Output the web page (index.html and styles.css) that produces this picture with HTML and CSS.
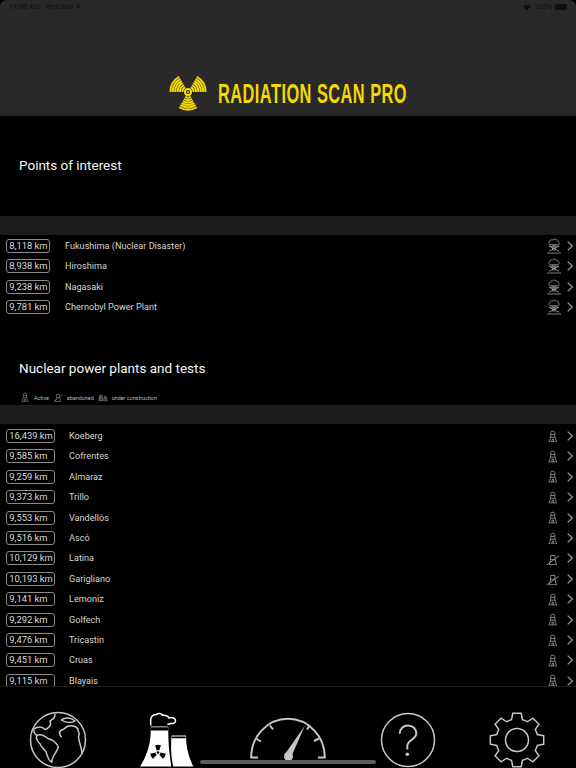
FILE: index.html
```html
<!DOCTYPE html>
<html lang="en">
<head>
<meta charset="utf-8">
<title>Radiation Scan Pro</title>
<link rel="stylesheet" href="styles.css">
</head>
<body>
<svg class="defs" width="0" height="0" aria-hidden="true">
  <symbol id="i-cloud" viewBox="0 0 16 16">
    <path d="M5 6.800C2.800 6.800 2.200 4.800 3.500 3.900C3.700 2 5.500 1.600 6.300 2C7 .8 9.500 .8 10 2C11 1.600 12.600 2.200 12.500 3.900C14 4.800 13.300 6.800 11 6.800Z"/>
    <path d="M3 8.200H13M7 6.800V9.500M9 6.800V9.500M3 8.200L13 13.200M13 8.200L3 13.200M6.500 9.800H9.500V12H6.500ZM1 15H15"/>
  </symbol>
  <symbol id="i-tower" viewBox="0 0 12 16">
    <path d="M3.500 6V3C3.500 1 8.500 1 8.500 3V6C8.500 9 9.500 12 11 15H1C2.500 12 3.500 9 3.500 6Z"/>
    <path d="M3.500 5.500H8.500M3 9H9M5 15V11.500H7V15"/>
  </symbol>
  <symbol id="i-off" viewBox="0 0 16 16">
    <path d="M5.500 6V4H10.500V6C10.500 9 11 12 12.500 15H3.500C5 12 5.500 9 5.500 6Z"/>
    <path d="M.5 15.500L15.500 4.500M6 9H10"/>
  </symbol>
  <symbol id="i-build" viewBox="0 0 16 16">
    <path d="M1 14L3.500 5H6.500L8 14ZM9 14L10.500 7H13L15 14ZM2 10H7M10 10.500H14M3 5V14M5 5V14M11.500 7V14"/>
  </symbol>
  <symbol id="i-chev" viewBox="0 0 6 10">
    <path d="M.7 .6L5.300 5L.7 9.400"/>
  </symbol>
</svg>

<div class="page">
  <header class="top">
    <div class="status">
      <span class="status-time">11:00 AM</span>
      <span class="status-date">Wed Mar 4</span>
      <span class="status-right">
        <svg class="wifi" viewBox="0 0 10 8"><path d="M5 7.500L.5 2.800C3 .4 7 .4 9.500 2.800Z"/></svg>
        <span>100%</span>
        <span class="battery"></span>
      </span>
    </div>
    <div class="brand">
      <svg class="brand-mark" viewBox="-21 -21 42 42">
        <circle class="mark-ring" r="3.200"/>
        <circle class="mark-dot" r="1"/>
        <g class="mark-blade">
          <path d="M-3 5.200A6 6 0 0 0 3 5.200M-4.250 7.360A8.500 8.500 0 0 0 4.250 7.360M-5.500 9.530A11 11 0 0 0 5.500 9.530M-6.750 11.690A13.500 13.500 0 0 0 6.750 11.690M-8 13.860A16 16 0 0 0 8 13.860M-9.250 16.020A18.500 18.500 0 0 0 9.250 16.020"/>
        </g>
        <g class="mark-blade" transform="rotate(120)">
          <path d="M-3 5.200A6 6 0 0 0 3 5.200M-4.250 7.360A8.500 8.500 0 0 0 4.250 7.360M-5.500 9.530A11 11 0 0 0 5.500 9.530M-6.750 11.690A13.500 13.500 0 0 0 6.750 11.690M-8 13.860A16 16 0 0 0 8 13.860M-9.250 16.020A18.500 18.500 0 0 0 9.250 16.020"/>
        </g>
        <g class="mark-blade" transform="rotate(240)">
          <path d="M-3 5.200A6 6 0 0 0 3 5.200M-4.250 7.360A8.500 8.500 0 0 0 4.250 7.360M-5.500 9.530A11 11 0 0 0 5.500 9.530M-6.750 11.690A13.500 13.500 0 0 0 6.750 11.690M-8 13.860A16 16 0 0 0 8 13.860M-9.250 16.020A18.500 18.500 0 0 0 9.250 16.020"/>
        </g>
      </svg>
      <span class="brand-name">RADIATION SCAN PRO</span>
    </div>
  </header>

  <section class="heading heading-poi">
    <h2>Points of interest</h2>
  </section>
  <div class="band"></div>
  <ul class="list list-poi">
    <li class="row"><span class="dist">8,118 km</span><span class="name">Fukushima (Nuclear Disaster)</span><svg class="ico ico-cloud"><use href="#i-cloud"/></svg><svg class="chev"><use href="#i-chev"/></svg></li>
    <li class="row"><span class="dist">8,938 km</span><span class="name">Hiroshima</span><svg class="ico ico-cloud"><use href="#i-cloud"/></svg><svg class="chev"><use href="#i-chev"/></svg></li>
    <li class="row"><span class="dist">9,238 km</span><span class="name">Nagasaki</span><svg class="ico ico-cloud"><use href="#i-cloud"/></svg><svg class="chev"><use href="#i-chev"/></svg></li>
    <li class="row"><span class="dist">9,781 km</span><span class="name">Chernobyl Power Plant</span><svg class="ico ico-cloud"><use href="#i-cloud"/></svg><svg class="chev"><use href="#i-chev"/></svg></li>
  </ul>

  <section class="heading heading-plants">
    <h2>Nuclear power plants and tests</h2>
    <div class="legend">
      <svg class="legend-ico"><use href="#i-tower"/></svg><span>Active</span>
      <svg class="legend-ico"><use href="#i-off"/></svg><span>abandoned</span>
      <svg class="legend-ico"><use href="#i-build"/></svg><span>under construction</span>
    </div>
  </section>
  <div class="band"></div>
  <ul class="list list-plants">
    <li class="row"><span class="dist">16,439 km</span><span class="name">Koeberg</span><svg class="ico"><use href="#i-tower"/></svg><svg class="chev"><use href="#i-chev"/></svg></li>
    <li class="row"><span class="dist">9,585 km</span><span class="name">Cofrentes</span><svg class="ico"><use href="#i-tower"/></svg><svg class="chev"><use href="#i-chev"/></svg></li>
    <li class="row"><span class="dist">9,259 km</span><span class="name">Almaraz</span><svg class="ico"><use href="#i-tower"/></svg><svg class="chev"><use href="#i-chev"/></svg></li>
    <li class="row"><span class="dist">9,373 km</span><span class="name">Trillo</span><svg class="ico"><use href="#i-tower"/></svg><svg class="chev"><use href="#i-chev"/></svg></li>
    <li class="row"><span class="dist">9,553 km</span><span class="name">Vandellòs</span><svg class="ico"><use href="#i-tower"/></svg><svg class="chev"><use href="#i-chev"/></svg></li>
    <li class="row"><span class="dist">9,516 km</span><span class="name">Ascó</span><svg class="ico"><use href="#i-tower"/></svg><svg class="chev"><use href="#i-chev"/></svg></li>
    <li class="row"><span class="dist">10,129 km</span><span class="name">Latina</span><svg class="ico ico-off"><use href="#i-off"/></svg><svg class="chev"><use href="#i-chev"/></svg></li>
    <li class="row"><span class="dist">10,193 km</span><span class="name">Garigliano</span><svg class="ico ico-off"><use href="#i-off"/></svg><svg class="chev"><use href="#i-chev"/></svg></li>
    <li class="row"><span class="dist">9,141 km</span><span class="name">Lemoniz</span><svg class="ico"><use href="#i-tower"/></svg><svg class="chev"><use href="#i-chev"/></svg></li>
    <li class="row"><span class="dist">9,292 km</span><span class="name">Golfech</span><svg class="ico"><use href="#i-tower"/></svg><svg class="chev"><use href="#i-chev"/></svg></li>
    <li class="row"><span class="dist">9,476 km</span><span class="name">Tricastin</span><svg class="ico"><use href="#i-tower"/></svg><svg class="chev"><use href="#i-chev"/></svg></li>
    <li class="row"><span class="dist">9,451 km</span><span class="name">Cruas</span><svg class="ico"><use href="#i-tower"/></svg><svg class="chev"><use href="#i-chev"/></svg></li>
    <li class="row"><span class="dist">9,115 km</span><span class="name">Blayais</span><svg class="ico"><use href="#i-tower"/></svg><svg class="chev"><use href="#i-chev"/></svg></li>
  </ul>

  <nav class="tabs">
    <svg class="tab tab-line" viewBox="0 0 60 60">
      <circle cx="30" cy="30" r="27.500"/>
      <path d="M8.700 25.500C12 23.500 17 26 20.300 28.800C24 29 29 33 30.300 37.200C29 42 24 46 23.700 52.200C20 50 19.500 46 18.700 43.800C18 39 13 38 12 33.800C9 31 8 28 8.700 25.500Z"/>
      <path d="M33.700 27.200C30 23.500 31 20.500 36 19C40 14.500 47 15 50 19C49 22 53 22 50.500 27C51 33 54 38 54 44"/>
      <path d="M33.500 10C37 7 43 7.500 47 11C44 13 37 13 33.500 10Z"/>
      <path d="M5.500 19C9 17 14 16 17 19.500C20 19 24 15 22 11C25 9 27 8 27 4M6 19.500C5 22 7 24 8.700 25.500"/>
    </svg>
    <svg class="tab tab-plant" viewBox="0 0 60 60">
      <path class="plant-fill" d="M13.700 16.500H31.300C31 30 32 42 34.300 56.500H3C10 46 14.500 32 13.700 16.500Z"/>
      <path class="plant-fill" d="M34.700 25.500H49C49 36 51 46 56.300 56.500H36.200C34 46 33.500 36 34.700 25.500Z"/>
      <path class="plant-cut" d="M13.800 17.200H31.200V20.500H13.800ZM35 26.500H48.700V28.200H35Z"/>
      <path class="plant-smoke" d="M13.700 15.500V10C13.700 6.500 16 4.500 18.700 4.800C21 3 24.500 3.200 25.500 5.200C28 5 31 6 32 8C35 7 38.500 8 38.500 10.500C38.500 13 36 14 33.700 13.300C33 14 31.500 14.500 30.500 14"/>
      <g class="plant-cut" transform="translate(21 42.500)">
        <circle r="1.300"/>
        <path d="M-2.900 -7.300A8 8 0 0 1 2.900 -7.300L1.300 -2.100A2.500 2.500 0 0 0 -1.300 -2.100Z"/>
        <path d="M-2.900 -7.300A8 8 0 0 1 2.900 -7.300L1.300 -2.100A2.500 2.500 0 0 0 -1.300 -2.100Z" transform="rotate(120)"/>
        <path d="M-2.900 -7.300A8 8 0 0 1 2.900 -7.300L1.300 -2.100A2.500 2.500 0 0 0 -1.300 -2.100Z" transform="rotate(240)"/>
      </g>
    </svg>
    <svg class="tab tab-gauge tab-line" viewBox="0 0 80 60">
      <path d="M10 47.500H3.200A36.800 38.700 0 0 1 76.800 47.500H70"/>
      <path d="M8.500 29L13 31.500M22 15.500L25 19.500M59 19.500L62 15M66 31L71 28.500"/>
      <path class="gauge-solid" d="M57 15.500L44 45L37 44Z"/>
      <circle class="gauge-solid" cx="40.500" cy="46.500" r="4.500"/>
    </svg>
    <svg class="tab tab-line" viewBox="0 0 60 60">
      <circle cx="30" cy="30" r="26.500"/>
      <path class="q" d="M21.700 23.800C21.700 18.500 25.500 15.500 30 15.500C34.800 15.500 38.300 19 38.300 23.500C38.300 29.500 29.300 30 29.300 36V39.500"/>
      <circle class="gauge-solid" cx="29.300" cy="44.200" r="1.800"/>
    </svg>
    <svg class="tab tab-line" viewBox="-30 -30 60 60">
      <circle r="11.500"/>
      <g>
        <path d="M-8.040 -19.400L-5.500 -20.300L-4.200 -26.700H4.200L5.500 -20.300L8.040 -19.400"/>
        <path d="M-8.040 -19.400L-5.500 -20.300L-4.200 -26.700H4.200L5.500 -20.300L8.040 -19.400" transform="rotate(45)"/>
        <path d="M-8.040 -19.400L-5.500 -20.300L-4.200 -26.700H4.200L5.500 -20.300L8.040 -19.400" transform="rotate(90)"/>
        <path d="M-8.040 -19.400L-5.500 -20.300L-4.200 -26.700H4.200L5.500 -20.300L8.040 -19.400" transform="rotate(135)"/>
        <path d="M-8.040 -19.400L-5.500 -20.300L-4.200 -26.700H4.200L5.500 -20.300L8.040 -19.400" transform="rotate(180)"/>
        <path d="M-8.040 -19.400L-5.500 -20.300L-4.200 -26.700H4.200L5.500 -20.300L8.040 -19.400" transform="rotate(225)"/>
        <path d="M-8.040 -19.400L-5.500 -20.300L-4.200 -26.700H4.200L5.500 -20.300L8.040 -19.400" transform="rotate(270)"/>
        <path d="M-8.040 -19.400L-5.500 -20.300L-4.200 -26.700H4.200L5.500 -20.300L8.040 -19.400" transform="rotate(315)"/>
      </g>
    </svg>
  </nav>
  <div class="home-bar"></div>
</div>
</body>
</html>
```

FILE: styles.css
```css
* { box-sizing: border-box; }
html, body { margin: 0; padding: 0; background: #000; }
.defs { position: absolute; }
.page {
  position: relative;
  width: 576px;
  height: 768px;
  overflow: hidden;
  display: flex;
  flex-direction: column;
  background: #000;
  color: #fff;
  font-family: Roboto, "Liberation Sans", sans-serif;
}

/* header */
.top {
  height: 115.500px;
  flex: none;
  background: #292929;
  border-radius: 7px 7px 0 0;
  display: flex;
  flex-direction: column;
  justify-content: space-between;
}
.status {
  display: flex;
  align-items: center;
  gap: 5px;
  padding: 2px 9px 0 9px;
  font-size: 7.300px;
  line-height: 10px;
  color: #0f0f0f;
}
.status-right { margin-left: auto; display: flex; align-items: center; gap: 3px; }
.wifi { width: 8px; height: 7px; fill: #0f0f0f; }
.battery { width: 12px; height: 5.500px; background: #0f0f0f; border-radius: 1.500px; }
.brand {
  display: flex;
  align-items: center;
  padding-left: 168px;
  gap: 10px;
  height: 46px;
}
.brand-mark { width: 40px; height: 40px; margin-top: -1px; flex: none; fill: none; }
.mark-ring { stroke: #f5d800; stroke-width: 2.200; }
.mark-dot { fill: #f5d800; }
.mark-blade path { stroke: #f5d800; stroke-width: 2.050; fill: none; }
.brand-name {
  font-family: "Liberation Sans", sans-serif;
  font-weight: 700;
  font-size: 27px;
  line-height: 32px;
  letter-spacing: 0.800px;
  color: #f5d800;
  margin-top: 2px;
  white-space: nowrap;
  transform: scaleX(0.605);
  transform-origin: left center;
}

/* section headings */
.heading { flex: none; padding-left: 19px; }
.heading h2 { margin: 0; font-weight: 400; font-size: 13.500px; line-height: 20px; color: #f6f6f6; }
.heading-poi { height: 100.500px; padding-top: 39.500px; }
.heading-plants { height: 87.700px; padding-top: 41px; }
.legend {
  display: flex;
  align-items: center;
  margin-top: 15px;
  margin-left: 1px;
  font-size: 5.400px;
  line-height: 10px;
  color: #bbb;
}
.legend span { margin-left: 4px; margin-right: 4px; }
.legend-ico { width: 10px; height: 10px; fill: none; stroke: #888; stroke-width: 1; margin-top: -3px; }
.band { flex: none; height: 19px; background: #1c1c1c; }

/* lists */
.list { list-style: none; margin: 0; flex: none; padding: 0.800px 0 0; }
.list-plants { height: 261.800px; overflow: hidden; padding-top: 1.600px; }
.row {
  height: 20.420px;
  display: flex;
  align-items: center;
  padding-left: 6px;
  font-size: 9.150px;
}
.dist {
  flex: none;
  height: 14px;
  line-height: 12px;
  font-size: 9.400px;
  border: 1px solid #8a8a8a;
  border-radius: 3px;
  padding-left: 2.300px;
  color: #dadada;
  white-space: nowrap;
}
.list-poi .dist { width: 44px; }
.list-plants .dist { width: 48.500px; }
.name { color: #d4d4d4; flex: 1; white-space: nowrap; margin-left: 15px; }
.list-plants .name { margin-left: 14.500px; }
.ico {
  flex: none;
  width: 9.600px;
  height: 12.800px;
  margin-right: 9.200px;
  fill: none;
  stroke: #a0a0a0;
  stroke-width: 1;
}
.ico-cloud { width: 16px; height: 16px; margin-right: 5.500px; stroke-width: 0.800; }
.ico-off { width: 13.600px; height: 13.600px; margin-right: 7.700px; }
.chev {
  flex: none;
  width: 6px;
  height: 10px;
  margin-right: 3px;
  fill: none;
  stroke: #9a9a9a;
  stroke-width: 1.200;
}

/* tab bar */
.tabs {
  flex: none;
  height: 82px;
  border-top: 1px solid #1d1d1d;
  padding-top: 22.500px;
  display: grid;
  grid-template-columns: 116px 102px 139px 102px 115px;
  justify-items: center;
  align-items: start;
  margin-top: auto;
}
.tab { width: 60px; height: 60px; display: block; }
.tab-gauge { width: 80px; }
.tab-line { fill: none; stroke: #c6c6c6; stroke-width: 1.500; }
.tab-gauge { stroke-width: 2; }
.gauge-solid { fill: #c6c6c6; stroke: none; }
.q { stroke-width: 2; }
.plant-fill { fill: #fff; }
.plant-cut { fill: #000; }
.plant-smoke { fill: none; stroke: #fff; stroke-width: 1.500; }
.home-bar {
  position: absolute;
  left: 200px;
  top: 760px;
  width: 176px;
  height: 3.500px;
  border-radius: 2px;
  background: #5c5c5c;
}
```
